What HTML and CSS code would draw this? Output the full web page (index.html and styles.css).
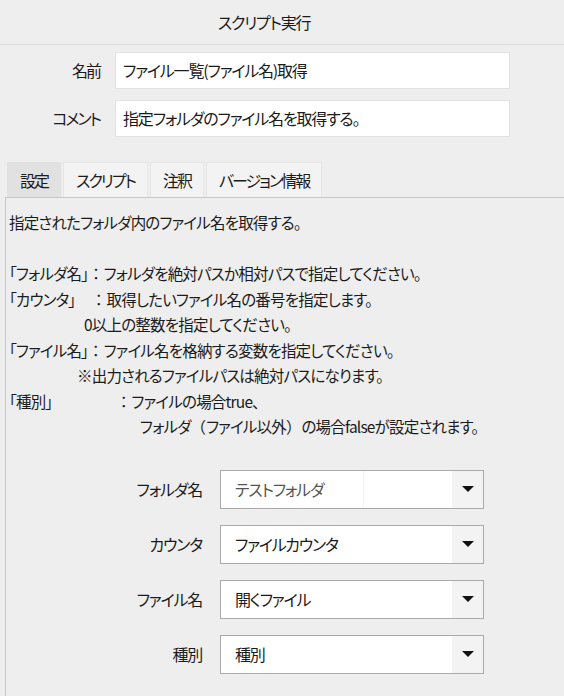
FILE: index.html
```html
<!DOCTYPE html>
<html lang="ja">
<head>
  <meta charset="UTF-8">
  <title>スクリプト実行</title>
  <link rel="stylesheet" href="styles.css">
</head>
<body>

  <div class="titlebar">スクリプト実行</div>

  <div class="fields">
    <label class="field-label">名前</label>
    <div class="text-box">ファイル一覧(ファイル名)取得</div>
    <label class="field-label">コメント</label>
    <div class="text-box">指定フォルダのファイル名を取得する。</div>
  </div>

  <div class="tabs">
    <div class="tab active">設定</div>
    <div class="tab">スクリプト</div>
    <div class="tab">注釈</div>
    <div class="tab">バージョン情報</div>
  </div>

  <div class="panel">
    <div class="desc">
      <div>指定されたフォルダ内のファイル名を取得する。</div>
      <div class="blank"></div>
      <div><span class="key">「フォルダ名」</span><span class="fw">：</span>フォルダを絶対パスか相対パスで指定してください。</div>
      <div><span class="key key-wide">「カウンタ」</span><span class="fw">：</span>取得したいファイル名の番号を指定します。</div>
      <div class="indent-1">0以上の整数を指定してください。</div>
      <div><span class="key">「ファイル名」</span><span class="fw">：</span>ファイル名を格納する変数を指定してください。</div>
      <div class="indent-2">※出力されるファイルパスは絶対パスになります。</div>
      <div><span class="key key-long">「種別」</span><span class="fw">：</span>ファイルの場合true、</div>
      <div class="indent-3">フォルダ<span class="fw">（</span>ファイル以外<span class="fw">）</span>の場合falseが設定されます。</div>
    </div>

    <div class="params">
      <label class="param-label">フォルダ名</label>
      <div class="combo editable">
        <span class="combo-text muted">テストフォルダ</span>
        <span class="combo-spacer"></span>
        <span class="combo-arrow"><i class="tri"></i></span>
      </div>

      <label class="param-label">カウンタ</label>
      <div class="combo">
        <span class="combo-text">ファイルカウンタ</span>
        <span class="combo-arrow"><i class="tri"></i></span>
      </div>

      <label class="param-label">ファイル名</label>
      <div class="combo">
        <span class="combo-text">開くファイル</span>
        <span class="combo-arrow"><i class="tri"></i></span>
      </div>

      <label class="param-label">種別</label>
      <div class="combo">
        <span class="combo-text">種別</span>
        <span class="combo-arrow"><i class="tri"></i></span>
      </div>
    </div>
  </div>

</body>
</html>
```

FILE: styles.css
```css
html, body {
  height: 100%;
}
body {
  margin: 0;
  background-color: #eeeeee;
  color: #1b1b1b;
  font-family: "Noto Sans CJK JP", "Noto Sans", sans-serif;
  font-feature-settings: "palt";
  font-size: 16px;
  letter-spacing: -1.2px;
  overflow: hidden;
}
.titlebar {
  height: 44px;
  line-height: 44px;
  text-align: center;
  padding-right: 36px;
  border-bottom: 1px solid #dddddd;
}
.fields {
  display: grid;
  grid-template-columns: 100px 395px;
  column-gap: 15px;
  row-gap: 11px;
  margin-top: 7px;
}
.field-label {
  text-align: right;
  line-height: 37px;
  letter-spacing: -2px;
}
.text-box {
  height: 35px;
  line-height: 35px;
  background-color: #fff;
  border: 1px solid #e2e2e2;
  padding-left: 7px;
}
.tabs {
  display: flex;
  gap: 2px;
  margin: 25px 0 0 7px;
}
.tab {
  height: 34px;
  line-height: 34px;
  padding: 0 12px;
  background-color: #f3f3f3;
  border: 1px solid #e6e6e6;
  border-bottom: none;
  letter-spacing: -2px;
}
.tab.active {
  background-color: #e1e1e1;
  border-color: #e1e1e1;
}
.panel {
  margin-left: 5px;
  border-top: 1px solid #c6c6c6;
  border-left: 1px solid #c6c6c6;
  height: 500px;
  padding: 12px 0 0 3px;
}
.desc {
  line-height: 25.5px;
  font-size: 15.5px;
  letter-spacing: -0.8px;
}
.desc .blank {
  height: 25.5px;
}
.fw {
  font-feature-settings: normal;
  letter-spacing: 0;
}
.key {
  display: inline-block;
}
.key-wide {
  width: 82px;
}
.key-long {
  width: 107px;
}
.indent-1 {
  padding-left: 75px;
}
.indent-2 {
  padding-left: 68px;
}
.indent-3 {
  padding-left: 131px;
}
.params {
  display: grid;
  grid-template-columns: 193px 264px;
  column-gap: 18px;
  row-gap: 16px;
  margin-top: 30px;
}
.param-label {
  text-align: right;
  line-height: 39px;
}
.combo {
  display: flex;
  height: 37px;
  background-color: #fff;
  border: 1px solid #a9a9a9;
}
.combo-text {
  flex: 1;
  line-height: 37px;
  padding-left: 14px;
}
.combo-text.muted {
  color: #555;
}
.combo.editable .combo-text {
  flex: 0 0 128px;
  border-right: 1px solid #f2f2f2;
}
.combo-spacer {
  flex: 1;
}
.combo-arrow {
  width: 31px;
  background-color: #f3f3f3;
  display: flex;
  align-items: center;
  justify-content: center;
}
.tri {
  width: 0;
  height: 0;
  border-left: 6px solid transparent;
  border-right: 6px solid transparent;
  border-top: 6px solid #111;
}
```
